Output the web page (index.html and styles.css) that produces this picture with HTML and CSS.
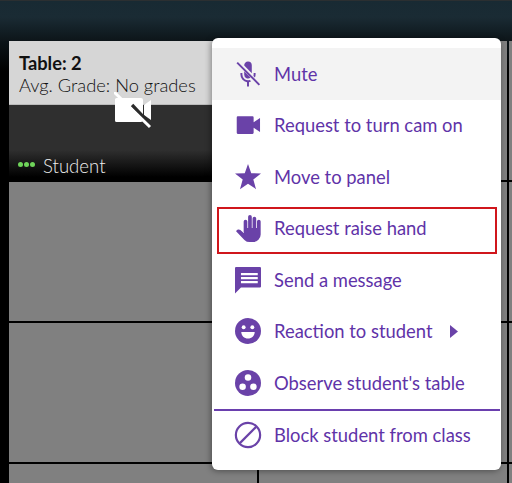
FILE: index.html
```html
<!DOCTYPE html>
<html lang="en">
<head>
<meta charset="utf-8">
<title>Classroom</title>
<link rel="stylesheet" href="styles.css">
</head>
<body>
<div class="page">
  <header class="topbar"></header>
  <main class="stage">
    <div class="grid">
      <section class="cell cell-live">
        <div class="table-info">
          <div class="table-name">Table: 2</div>
          <div class="table-grade">Avg. Grade: No grades</div>
        </div>
        <div class="video">
          <svg class="cam-off" viewBox="0 0 38 38"><path d="M2.500 6H27a2 2 0 0 1 2 2v20a2 2 0 0 1-2 2H2.500A1.500 1.500 0 0 1 1 28.500v-21A1.500 1.500 0 0 1 2.500 6z" fill="#fff"/><path d="M30 13l7-5v20l-7-5z" fill="#fff"/><path d="M18 13L33 29" stroke="#2b2b2b" stroke-width="3.500" fill="none"/><path d="M0 0L36 35" stroke="#fff" stroke-width="3" fill="none"/></svg>
          <div class="name-bar"><span class="dots"><i></i><i></i><i></i></span><span class="student">Student</span></div>
        </div>
      </section>
      <section class="cell"></section><section class="cell narrow"></section>
      <section class="cell"></section><section class="cell"></section><section class="cell narrow"></section>
      <section class="cell"></section><section class="cell"></section><section class="cell narrow"></section>
      <section class="cell"></section><section class="cell"></section><section class="cell narrow"></section>
    </div>
    <nav class="menu">
      <a class="item active">
        <svg viewBox="0 0 24 24"><path d="M12 .5a3.500 3.500 0 0 1 3.500 3.500v7.200L8.500 4.200A3.500 3.500 0 0 1 12 .5zM8.500 9.500l5.800 5.800a3.500 3.500 0 0 1-5.800-2.600zM5 11h1.800v1.500a5.200 5.200 0 0 0 6.800 5l1.300 1.300a7 7 0 0 1-2 .7V23.500h-1.800V19.500A7 7 0 0 1 5 12.500zM17.200 11H19v1.500a7 7 0 0 1-.6 2.800l-1.400-1.400a5 5 0 0 0 .2-1.400z"/><path d="M2 1.500L22.500 22" stroke="#6a42a8" stroke-width="1.800" fill="none"/></svg>
        <span>Mute</span>
      </a>
      <a class="item">
        <svg viewBox="0 0 24 24"><path d="M1.600 5a1 1 0 0 1 1-1h13.600a1 1 0 0 1 1 1v4.500l5.900-4V18.500l-5.900-4v4.700a1 1 0 0 1-1 1H2.600a1 1 0 0 1-1-1z"/></svg>
        <span>Request to turn cam on</span>
      </a>
      <a class="item">
        <svg viewBox="0 0 24 24"><path d="M12 0l3 8.500 9 .3-7.100 5.500 2.500 8.900L12 18.200l-7.400 5 2.500-8.900L0 8.800l9-.3z"/></svg>
        <span>Move to panel</span>
      </a>
      <a class="item outlined">
        <svg viewBox="0 0 24 24"><path d="M8 13V6a1.700 1.700 0 0 1 3.400 0v6h.7V1.700a1.700 1.700 0 0 1 3.400 0V12h.7V3.200a1.700 1.700 0 0 1 3.400 0V12h.7V6a1.700 1.700 0 0 1 3.400 0v12a7 7 0 0 1-7 7h-3a7 7 0 0 1-5-2L1 15c.7-1.700 2.500-2.200 4-1.200l3 2.700z"/></svg>
        <span>Request raise hand</span>
      </a>
      <a class="item">
        <svg viewBox="0 0 24 24"><path d="M1 0h22a1 1 0 0 1 1 1v17a1 1 0 0 1-1 1H5.500L0 24.500V1a1 1 0 0 1 1-1z"/><path d="M5.500 5.500H21v2H5.500zM5.500 9.200H21v2H5.500zM5.500 12.900H21v2.200H5.500z" fill="#fff"/></svg>
        <span>Send a message</span>
      </a>
      <a class="item">
        <svg viewBox="0 0 24 24"><circle cx="12" cy="12" r="12"/><circle cx="8" cy="8.500" r="1.800" fill="#fff"/><circle cx="16" cy="8.500" r="1.800" fill="#fff"/><path d="M5.800 13h12.400c0 3.500-2.800 6-6.200 6s-6.200-2.500-6.200-6z" fill="#fff"/></svg>
        <span>Reaction to student</span>
        <svg class="caret" viewBox="0 0 8 13"><path d="M0 0l8 6.500-8 6.500z"/></svg>
      </a>
      <a class="item">
        <svg viewBox="0 0 24 24"><circle cx="12" cy="12" r="12"/><circle cx="12" cy="7" r="3" fill="#fff"/><circle cx="7" cy="15.500" r="3" fill="#fff"/><circle cx="17" cy="15.500" r="3" fill="#fff"/></svg>
        <span>Observe student's table</span>
      </a>
      <a class="item divided">
        <svg viewBox="0 0 24 24"><circle cx="12" cy="12" r="11.200" fill="none" stroke="#6a42a8" stroke-width="2"/><path d="M4.500 19.500L19.500 4.500" stroke="#6a42a8" stroke-width="2" fill="none"/></svg>
        <span>Block student from class</span>
      </a>
    </nav>
  </main>
</div>
</body>
</html>
```
FILE: styles.css
```css
* { box-sizing: border-box; }
html, body { margin: 0; padding: 0; }
body { width: 512px; height: 483px; overflow: hidden; background: #000; font-family: Lato, "Liberation Sans", sans-serif; }
.page { width: 512px; height: 483px; display: flex; flex-direction: column; }
.topbar { height: 41px; flex: none; border-top: 1px solid #2b2f31; background: linear-gradient(180deg, #182a33 0%, #1a2b34 40%, #0d1519 100%); }
.stage { position: relative; flex: 1; padding-left: 9px; background: linear-gradient(180deg, #0b1418 0, #000 30px); }
.grid { display: grid; grid-template-columns: 248px 248px 3px; grid-template-rows: 139px 139px 139px 30px; column-gap: 2px; row-gap: 2px; width: 503px; }
.cell { background: #808080; min-width: 0; }
.cell-live { display: flex; flex-direction: column; }
.table-info { height: 64px; flex: none; background: #d6d6d6; padding: 11px 10px 0; color: #111; font-size: 18.300px; line-height: 22px; border-bottom: 1px solid #bbb; }
.table-name { font-weight: 700; }
.table-grade { font-weight: 300; color: #111; }
.video { flex: 1; position: relative; background: linear-gradient(180deg, #2f2f2f 0, #2f2f2f 45px, #000 72px); }
.cam-off { position: absolute; left: 105px; top: -13px; width: 38px; height: 38px; }
.name-bar { position: absolute; left: 9px; bottom: 3px; display: flex; align-items: center; gap: 8px; color: #eee; font-size: 18.600px; font-weight: 300; line-height: 22px; }
.dots { display: flex; gap: 1px; margin-top: -3px; }
.dots i { width: 5px; height: 5px; border-radius: 50%; background: #6fd45a; }
.menu { position: absolute; left: 212px; top: -3px; width: 289px; height: 432px; padding-top: 10px; background: #fff; border-radius: 6px; box-shadow: -1px 1px 6px rgba(0,0,0,.4); }
.item { display: flex; align-items: center; height: 51.500px; padding-left: 23px; color: #5f33a8; font-size: 18.400px; line-height: 22px; }
.item svg { width: 26px; height: 26px; flex: none; margin-right: 13px; fill: #6a42a8; overflow: visible; }
.item.active { background: #f3f3f3; }
.item.outlined { position: relative; }
.item.outlined::after { content: ""; position: absolute; left: 5px; right: 4px; top: 4px; bottom: 0; border: 2px solid #d0161c; }
.item .caret { width: 8px; height: 13px; margin: 0 0 0 17px; }
.item.divided { border-top: 2px solid #6a3fae; margin: 0 1px 0 2px; padding-left: 21px; }
```
